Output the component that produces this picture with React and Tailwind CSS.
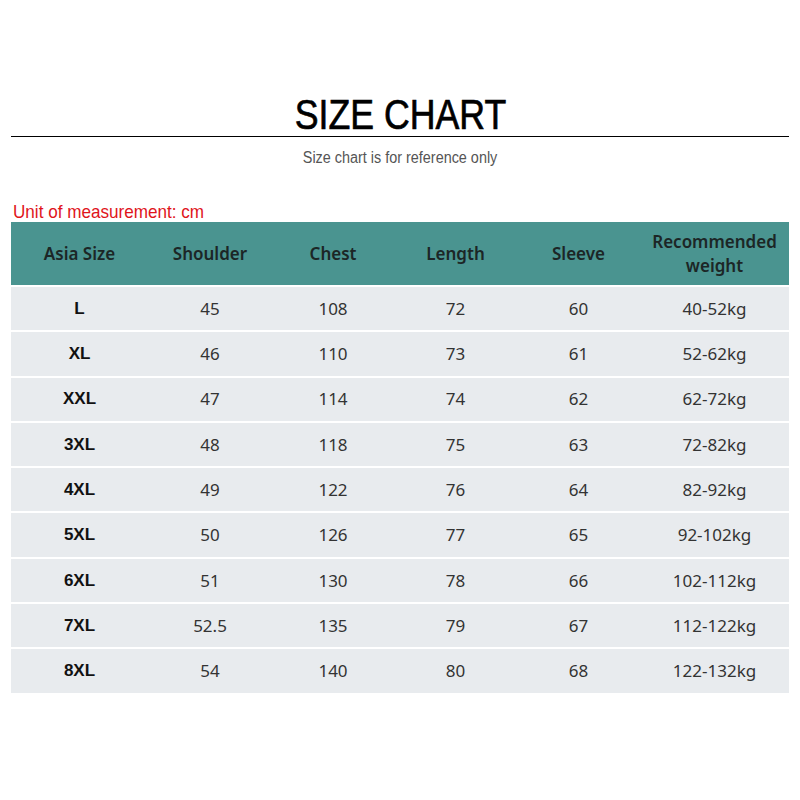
const rows = [
  ["L", "45", "108", "72", "60", "40-52kg"],
  ["XL", "46", "110", "73", "61", "52-62kg"],
  ["XXL", "47", "114", "74", "62", "62-72kg"],
  ["3XL", "48", "118", "75", "63", "72-82kg"],
  ["4XL", "49", "122", "76", "64", "82-92kg"],
  ["5XL", "50", "126", "77", "65", "92-102kg"],
  ["6XL", "51", "130", "78", "66", "102-112kg"],
  ["7XL", "52.5", "135", "79", "67", "112-122kg"],
  ["8XL", "54", "140", "80", "68", "122-132kg"],
];

const cols = "grid grid-cols-[137px_124px_122px_123px_123px_149px]";

export default function App() {
  return (
    <div className="w-[800px] h-[800px] bg-white flex flex-col">
      {/* Title, squeezed to look like a narrow face */}
      <div className="pt-[93px] flex flex-col items-center">
        <h1 className="inline-block scale-x-[0.85] text-[42px] leading-[44px] text-black font-['Liberation_Sans',sans-serif] [-webkit-text-stroke:0.7px_black]">
          SIZE CHART
        </h1>
      </div>
      <div className="mx-[11px] mt-[-1px] h-px bg-black" />
      <div className="mt-[12px] flex justify-center">
        <p className="inline-block scale-x-[0.9] text-[16px] leading-[18px] text-[#555] font-['Liberation_Sans',sans-serif]">
          Size chart is for reference only
        </p>
      </div>

      <div className="mt-[34px] ml-[13px] flex">
        <p className="inline-block origin-left scale-x-[0.9] text-[19px] leading-[21px] text-[#e0141b] font-['Liberation_Sans',sans-serif]">
          Unit of measurement: cm
        </p>
      </div>

      {/* Table */}
      <div className="ml-[11px] w-[778px] flex flex-col gap-[2px] font-['Noto_Sans',sans-serif]">
        <div className={`${cols} h-[63px] bg-[#4a9490] text-[17px] font-semibold text-[#1c2626]`}>
          {["Asia Size", "Shoulder", "Chest", "Length", "Sleeve"].map((h) => (
            <div key={h} className="flex items-center justify-center">
              {h}
            </div>
          ))}
          <div className="flex items-center justify-center text-center leading-[24px]">
            Recommended
            <br />
            weight
          </div>
        </div>
        {rows.map((r) => (
          <div key={r[0]} className={`${cols} h-[43.3px] bg-[#e8ebee] text-[17px] text-[#333]`}>
            {r.map((c, i) => (
              <div
                key={i}
                className={
                  i === 0
                    ? "flex items-center justify-center font-bold text-[#111] font-['Liberation_Sans',sans-serif]"
                    : "flex items-center justify-center"
                }
              >
                {c}
              </div>
            ))}
          </div>
        ))}
      </div>
    </div>
  );
}
